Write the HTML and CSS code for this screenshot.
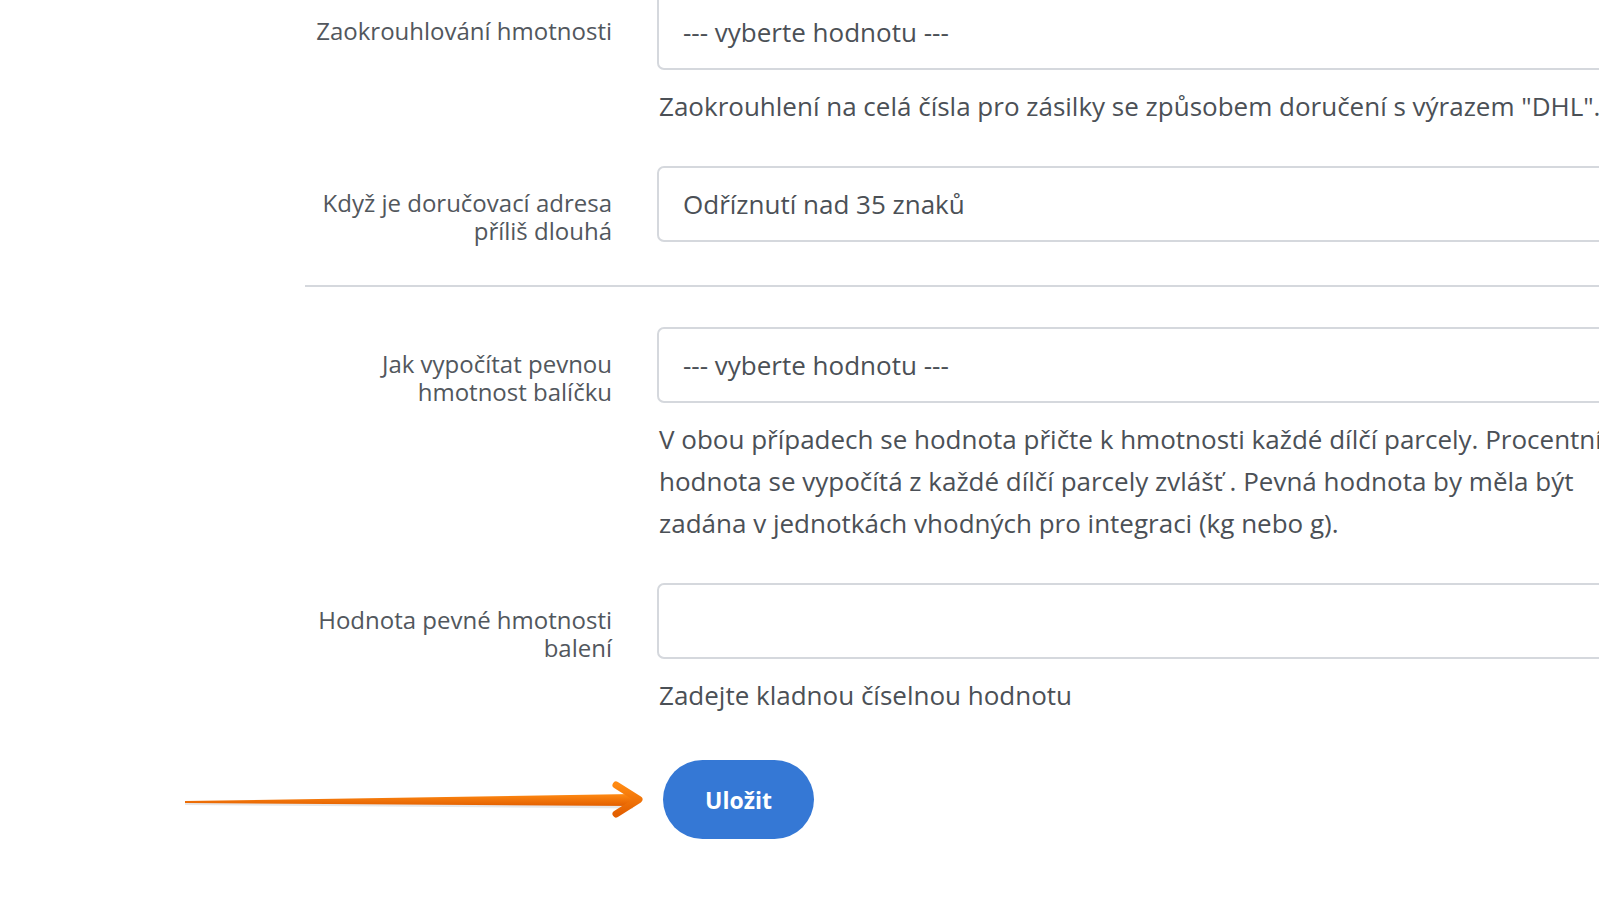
FILE: index.html
```html
<!DOCTYPE html>
<html lang="cs">
<head>
<meta charset="utf-8">
<title>Nastavení</title>
<link rel="stylesheet" href="styles.css">
</head>
<body>
<div class="page">
  <form class="form">
    <div class="group">
      <label class="label">Zaokrouhlování hmotnosti</label>
      <div class="field">
        <div class="control">--- vyberte hodnotu ---</div>
        <p class="help">Zaokrouhlení na celá čísla pro zásilky se způsobem doručení s výrazem "DHL".</p>
      </div>
    </div>
    <div class="group">
      <label class="label">Když je doručovací adresa příliš dlouhá</label>
      <div class="field">
        <div class="control">Odříznutí nad 35 znaků</div>
      </div>
    </div>
    <hr class="divider">
    <div class="group">
      <label class="label">Jak vypočítat pevnou hmotnost balíčku</label>
      <div class="field">
        <div class="control">--- vyberte hodnotu ---</div>
        <p class="help">V obou případech se hodnota přičte k hmotnosti každé dílčí parcely. Procentní hodnota se vypočítá z každé dílčí parcely zvlášť . Pevná hodnota by měla být zadána v jednotkách vhodných pro integraci (kg nebo g).</p>
      </div>
    </div>
    <div class="group">
      <label class="label">Hodnota pevné hmotnosti balení</label>
      <div class="field">
        <div class="control"></div>
        <p class="help">Zadejte kladnou číselnou hodnotu</p>
      </div>
    </div>
    <div class="actions">
      <button type="button" class="btn">Uložit</button>
    </div>
  </form>
  <svg class="arrow" width="470" height="40" viewBox="0 0 470 40">
    <defs>
      <linearGradient id="og" x1="0" y1="0" x2="0" y2="1">
        <stop offset="0" stop-color="#ff8a12"/>
        <stop offset="1" stop-color="#e35f00"/>
      </linearGradient>
    </defs>
    <polygon points="0,21 0,23.5 448,27 448,13" fill="#b9b9b9" opacity="0.35" transform="translate(0,1.5)"/>
    <polygon points="0,21 0,23 448,26 448,14" fill="url(#og)"/>
    <polyline points="431,5 454,19.5 431,34" fill="none" stroke="url(#og)" stroke-width="7" stroke-linecap="round" stroke-linejoin="round"/>
  </svg>
</div>
</body>
</html>
```
FILE: styles.css
```css
html, body {
  margin: 0;
  padding: 0;
  background: #ffffff;
  overflow: hidden;
}
body {
  font-family: "Open Sans", "Noto Sans", sans-serif;
  color: #4b5056;
}
.page {
  position: relative;
  width: 1599px;
  height: 905px;
  overflow: hidden;
}
.form {
  margin-top: -6px;
  margin-left: 305px;
  width: 1340px;
}
.group {
  display: grid;
  grid-template-columns: 322px 975px;
  column-gap: 30px;
  margin-bottom: 39px;
}
.label {
  padding-top: 23px;
  padding-right: 15px;
  text-align: right;
  font-size: 24px;
  line-height: 28px;
  color: #52575d;
}
.field {
  display: flex;
  flex-direction: column;
}
.control {
  box-sizing: border-box;
  height: 76px;
  border: 2px solid #d5d8dd;
  border-radius: 7px;
  padding: 0 24px;
  display: flex;
  align-items: center;
  font-size: 26px;
  color: #4b5056;
  background: #ffffff;
}
.help {
  margin: 15px 0 0;
  padding-left: 2px;
  font-size: 26px;
  line-height: 42px;
  color: #4b5056;
}
.divider {
  margin: 40px 0 40px;
  border: 0;
  height: 2px;
  background: #d5d8dd;
}
.actions {
  padding-left: 358px;
  padding-top: 5px;
}
.btn {
  width: 151px;
  height: 79px;
  border: 0;
  border-radius: 40px;
  background: #3578d5;
  color: #ffffff;
  font-family: "Open Sans", "Noto Sans", sans-serif;
  font-size: 23px;
  font-weight: 700;
  cursor: pointer;
}
.arrow {
  position: absolute;
  left: 185px;
  top: 780px;
}
```
